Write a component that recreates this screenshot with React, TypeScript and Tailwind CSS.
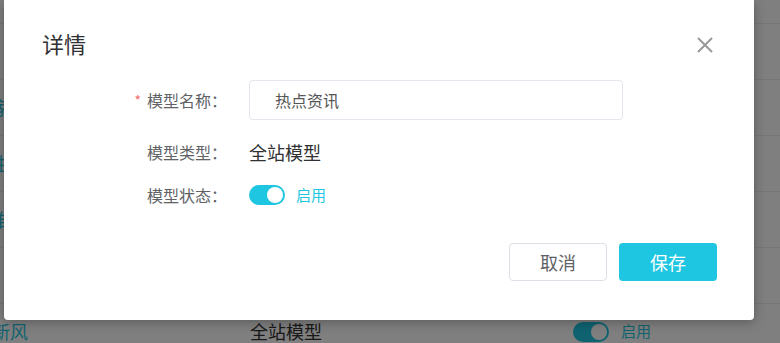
import React from "react";

const FONT = { fontFamily: '"Noto Sans CJK SC", "Noto Sans", sans-serif' };

function BgRow({ name, short }: { name: string; short?: boolean }) {
  return (
    <div className="flex h-[56px] shrink-0 items-center border-b border-[#ebeef5]">
      {short ? (
        <div className="w-[28px] shrink-0 whitespace-nowrap pl-[8px] text-[18px] text-[#1fc6e1]">{name}</div>
      ) : (
        <div className="flex w-[28px] shrink-0 justify-end whitespace-nowrap text-[18px] text-[#1fc6e1]">
          {name}
        </div>
      )}
      <div className="ml-[222px] w-[323px] shrink-0 text-[18px] text-[#333]">全站模型</div>
      <div className="flex items-center">
        <div className="flex h-[20px] w-[36px] items-center justify-end rounded-full bg-[#1fc6e1] px-[2px]">
          <div className="h-[16px] w-[16px] rounded-full bg-white" />
        </div>
        <span className="ml-[12px] text-[15px] text-[#1fc6e1]">启用</span>
      </div>
    </div>
  );
}

export default function App() {
  return (
    <div className="relative h-[343px] w-[780px] overflow-hidden bg-white" style={FONT}>
      {/* background table */}
      <div className="flex flex-col">
        <div className="h-[24px] shrink-0 border-b border-[#ebeef5]" />
        <BgRow name="资讯" short />
        <BgRow name="智能家居" />
        <BgRow name="健康生活" />
        <BgRow name="热门推荐" />
        <BgRow name="环保" short />
        <BgRow name="清新风" />
      </div>

      {/* overlay */}
      <div className="absolute inset-0 bg-black/50" />

      {/* dialog */}
      <div className="absolute left-[4px] top-0 flex h-[320px] w-[750px] flex-col rounded-b-[4px] bg-white shadow-[0_2px_12px_rgba(0,0,0,0.3)]">
        <div className="flex h-[80px] items-start justify-between pl-[38px] pr-[41px] pt-[27px]">
          <span className="text-[22px] leading-[32px] text-[#303133]">详情</span>
          <svg width="16" height="16" viewBox="0 0 16 16" className="mt-[10px]">
            <path d="M1 1 L15 15 M15 1 L1 15" stroke="#999999" strokeWidth="2" strokeLinecap="butt" />
          </svg>
        </div>

        <div className="flex flex-col pl-[118px]">
          <div className="flex h-[40px] items-center">
            <div className="flex w-[105px] items-center justify-end whitespace-nowrap text-[16px] text-[#606266]">
              <span className="mr-[6px] text-[14px] text-[#f56c6c]">*</span>
              模型名称：
            </div>
            <div className="ml-[22px] flex h-[40px] w-[374px] items-center rounded-[4px] border border-[#e4e7ed] pl-[25px] text-[16px] text-[#555]">
              热点资讯
            </div>
          </div>
          <div className="mt-[16px] flex h-[32px] items-center">
            <div className="w-[105px] whitespace-nowrap text-right text-[16px] text-[#606266]">模型类型：</div>
            <div className="ml-[22px] text-[18px] text-[#303133]">全站模型</div>
          </div>
          <div className="mt-[11px] flex h-[32px] items-center">
            <div className="w-[105px] whitespace-nowrap text-right text-[16px] text-[#606266]">模型状态：</div>
            <div className="ml-[22px] flex items-center">
              <div className="flex h-[20px] w-[36px] items-center justify-end rounded-full bg-[#1fc6e1] px-[2px]">
                <div className="h-[16px] w-[16px] rounded-full bg-white" />
              </div>
              <span className="ml-[11px] text-[15px] text-[#1fc6e1]">启用</span>
            </div>
          </div>
        </div>

        <div className="mt-[32px] flex justify-end gap-[12px] pr-[37px]">
          <button className="flex h-[38px] w-[98px] items-center justify-center rounded-[4px] border border-[#dcdfe6] bg-white text-[18px] text-[#606266]">
            取消
          </button>
          <button className="flex h-[38px] w-[98px] items-center justify-center rounded-[4px] bg-[#1fc6e1] text-[18px] text-white">
            保存
          </button>
        </div>
      </div>
    </div>
  );
}
